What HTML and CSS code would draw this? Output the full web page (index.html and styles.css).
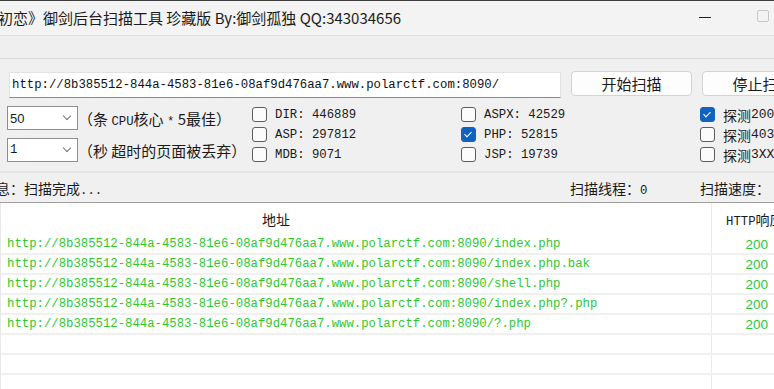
FILE: index.html
```html
<!DOCTYPE html>
<html>
<head>
    <title>御剑后台扫描工具</title>
    <link rel="stylesheet" href="styles.css">
</head>
<body>
    <div class="titlebar">
        <div class="title">初恋》御剑后台扫描工具 珍藏版 By:御剑孤独 QQ:343034656</div>
        <div class="win-min"></div>
        <div class="win-max"></div>
    </div>
    <div class="menubar"></div>

    <div class="panel">
        <div class="url-row">
            <div class="url-box">http://8b385512-844a-4583-81e6-08af9d476aa7.www.polarctf.com:8090/</div>
            <button class="btn">开始扫描</button>
            <button class="btn">停止扫描</button>
        </div>

        <div class="opt-row">
            <div class="opt-left">
                <div class="sel-line">
                    <div class="select"><span class="sel-sans">50</span><span class="chev"></span></div>
                    <div class="hint">（条 <span class="m">CPU</span>核心 <span class="m">*</span> 5最佳）</div>
                </div>
                <div class="sel-line">
                    <div class="select"><span class="m">1</span><span class="chev"></span></div>
                    <div class="hint">（秒 超时的页面被丢弃）</div>
                </div>
            </div>
            <div class="opt-col col1">
                <div class="chk"><span class="box"></span><span class="m">DIR: 446889</span></div>
                <div class="chk"><span class="box"></span><span class="m">ASP: 297812</span></div>
                <div class="chk"><span class="box"></span><span class="m">MDB: 9071</span></div>
            </div>
            <div class="opt-col col2">
                <div class="chk"><span class="box"></span><span class="m">ASPX: 42529</span></div>
                <div class="chk"><span class="box on"></span><span class="m">PHP: 52815</span></div>
                <div class="chk"><span class="box"></span><span class="m">JSP: 19739</span></div>
            </div>
            <div class="opt-col col3">
                <div class="chk"><span class="box on"></span><span class="cjk">探测</span><span class="m big">200</span></div>
                <div class="chk"><span class="box"></span><span class="cjk">探测</span><span class="m big">403</span></div>
                <div class="chk"><span class="box"></span><span class="cjk">探测</span><span class="m big">3XX</span></div>
            </div>
        </div>
    </div>

    <div class="status">
        <div class="st-msg">息：扫描完成<span class="m">...</span></div>
        <div class="st-thread">扫描线程：<span class="m">0</span></div>
        <div class="st-speed">扫描速度：</div>
    </div>

    <div class="table">
        <div class="thead">
            <div class="h-addr">地址</div>
            <div class="h-code"><span class="m">HTTP</span>响应</div>
        </div>
        <div class="trow"><div class="c-addr m">http://8b385512-844a-4583-81e6-08af9d476aa7.www.polarctf.com:8090/index.php</div><div class="c-code">200</div></div>
        <div class="trow"><div class="c-addr m">http://8b385512-844a-4583-81e6-08af9d476aa7.www.polarctf.com:8090/index.php.bak</div><div class="c-code">200</div></div>
        <div class="trow"><div class="c-addr m">http://8b385512-844a-4583-81e6-08af9d476aa7.www.polarctf.com:8090/shell.php</div><div class="c-code">200</div></div>
        <div class="trow"><div class="c-addr m">http://8b385512-844a-4583-81e6-08af9d476aa7.www.polarctf.com:8090/index.php?.php</div><div class="c-code">200</div></div>
        <div class="trow"><div class="c-addr m">http://8b385512-844a-4583-81e6-08af9d476aa7.www.polarctf.com:8090/?.php</div><div class="c-code">200</div></div>
        <div class="trow"><div class="c-addr"></div><div class="c-code"></div></div>
        <div class="trow"><div class="c-addr"></div><div class="c-code"></div></div>
        <div class="trow"><div class="c-addr"></div><div class="c-code"></div></div>
    </div>
</body>
</html>
```

FILE: styles.css
```css
body { margin: 0; width: 774px; height: 389px; overflow: hidden; background: #f0f0f0; color: #1a1a1a; font-family: "Noto Sans CJK SC", sans-serif; font-size: 14px; }
.m { font-family: "Liberation Mono", "Noto Sans CJK SC", monospace; font-size: 12.3px; }
.m.big { font-size: 13px; }
.cjk { font-family: "Noto Sans CJK SC", sans-serif; font-size: 14px; }

.titlebar { height: 34px; border-top: 1px solid #3a3a3a; background: #f3f3f3; display: flex; align-items: center; }
.title { font-size: 15px; margin-left: -2px; margin-top: -2px; white-space: nowrap; color: #1b1b1b; }
.win-min { width: 12px; height: 1px; background: #222; margin-left: 298px; margin-top: -1px; }
.win-max { width: 10px; height: 10px; border: 1px solid #c8c8c8; border-radius: 2px; margin-left: 46px; margin-top: -5px; }

.menubar { height: 22px; border-top: 1px solid #e0e0e0; border-bottom: 1px solid #dadada; background: #efefef; }

.panel { height: 112px; border-bottom: 2px solid #e4e4e4; }
.url-row { display: flex; gap: 10px; padding: 12px 0 0 9px; white-space: nowrap; overflow: hidden; }
.url-box { width: 548px; height: 24px; margin-top: 1px; background: #fff; border: 1px solid #e2e2e2; border-bottom-color: #8a8a8a; padding-left: 2px; line-height: 24px; font-family: "Liberation Mono", monospace; font-size: 12.3px; color: #111; flex: none; }
.btn { width: 121px; height: 25px; flex: none; background: #fdfdfd; border: 1px solid #d3d3d3; border-radius: 4px; font-family: "Noto Sans CJK SC", sans-serif; font-size: 15px; color: #1a1a1a; padding: 0; line-height: 22px; }

.opt-row { display: flex; margin-top: 8px; }
.opt-left { width: 245px; padding-left: 7px; display: flex; flex-direction: column; gap: 8px; flex: none; }
.sel-line { display: flex; align-items: center; height: 24px; }
.select { width: 67px; height: 22px; background: #fff; border: 1px solid #8f8f8f; display: flex; align-items: center; padding-left: 2px; position: relative; }
.sel-sans { font-family: "Liberation Sans", sans-serif; font-size: 13px; }
.chev { position: absolute; left: 56px; top: 6px; width: 5px; height: 5px; border-right: 1px solid #777; border-bottom: 1px solid #777; transform: rotate(45deg); }
.hint { margin-left: 0; font-size: 15px; white-space: nowrap; }
.hint .m { font-size: 12.3px; }

.opt-col { display: flex; flex-direction: column; gap: 5px; padding-top: 1px; flex: none; }
.col1 { width: 209px; }
.col2 { width: 239px; }
.chk { display: flex; align-items: center; height: 15px; white-space: nowrap; }
.box { width: 13px; height: 13px; border: 1px solid #5c5c5c; border-radius: 3px; background: #fbfbfb; margin-right: 8px; flex: none; position: relative; }
.box.on { background: #0f62c0; border-color: #0f62c0; }
.box.on::after { content: ""; position: absolute; left: 4px; top: 2px; width: 3px; height: 6px; border-right: 1px solid #fff; border-bottom: 1px solid #fff; transform: rotate(45deg); }

.status { height: 29px; border-bottom: 1px solid #a0a0a0; display: flex; align-items: center; white-space: nowrap; }
.st-msg { margin-left: -4px; width: 574px; }
.st-thread { width: 130px; }

.table { background: #fff; border-left: 1px solid #e8e8e8; height: 200px; }
.thead { display: flex; height: 32px; }
.h-addr { width: 711px; flex: none; box-sizing: border-box; border-right: 1px solid #ebebeb; padding-left: 261px; line-height: 33px; }
.h-code { padding-left: 14px; white-space: nowrap; line-height: 33px; }
.trow { display: flex; height: 18px; border-bottom: 2px solid #f0f0f0; }
.c-addr { width: 711px; flex: none; box-sizing: border-box; border-right: 1px solid #ebebeb; padding-left: 6px; line-height: 19px; color: #2fc82f; white-space: nowrap; }
.c-code { width: 56px; flex: none; text-align: right; line-height: 19px; color: #2fc82f; font-family: "Liberation Sans", sans-serif; font-size: 13.5px; }
```
